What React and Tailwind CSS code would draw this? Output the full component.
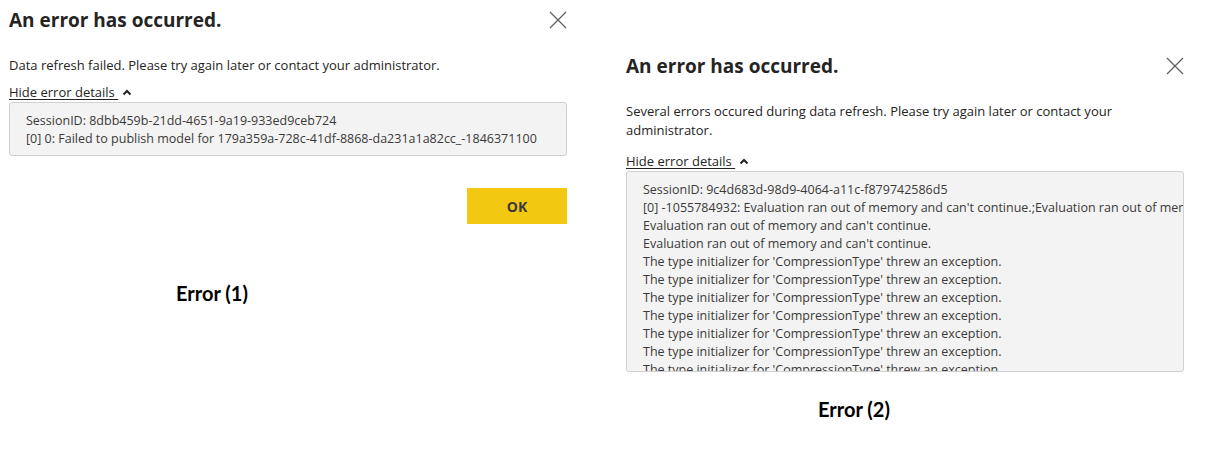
import React from 'react';

const ui = { fontFamily: '"Open Sans", "Noto Sans", sans-serif' };
const label = { fontFamily: 'Lato, "Open Sans", sans-serif' };

const details2 = [
  'SessionID: 9c4d683d-98d9-4064-a11c-f879742586d5',
  "[0] -1055784932: Evaluation ran out of memory and can't continue.;Evaluation ran out of memory and can't continue.",
  "Evaluation ran out of memory and can't continue.",
  "Evaluation ran out of memory and can't continue.",
  ...Array(7).fill("The type initializer for 'CompressionType' threw an exception."),
];

const details1 = [
  'SessionID: 8dbb459b-21dd-4651-9a19-933ed9ceb724',
  '[0] 0: Failed to publish model for 179a359a-728c-41df-8868-da231a1a82cc_-1846371100',
];

function CloseIcon() {
  return (
    <svg width="18" height="18" viewBox="0 0 18 18" className="text-[#605e5c]">
      <path d="M1 1 L17 17 M17 1 L1 17" stroke="currentColor" strokeWidth="1.2" fill="none" />
    </svg>
  );
}

function Chevron() {
  return (
    <svg width="10" height="7" viewBox="0 0 10 7" className="ml-[4px] inline-block">
      <path d="M1.5 5.5 L5 2 L8.5 5.5" stroke="#252423" strokeWidth="2" fill="none" />
    </svg>
  );
}

function ErrorDialog({ message, lines, scroll, gapLink, children }) {
  return (
    <div className="w-[558px] text-[#252423]" style={ui}>
      <div className="flex items-center justify-between">
        <h1 className="text-[19px] font-bold leading-[24px]">An error has occurred.</h1>
        <CloseIcon />
      </div>
      <p className="mt-[24px] text-[13px] leading-[19px]">{message}</p>
      <div className={`flex items-center text-[13px] leading-[18px] ${gapLink}`}>
        <span className="underline underline-offset-2">Hide error details&nbsp;</span>
        <Chevron />
      </div>
      <div
        className={`mt-[1px] rounded-[3px] border border-[#d0d0d0] bg-[#f3f3f3] pt-[9px] pb-[7px] pl-4 text-[12.5px] leading-[18px] text-[#3b3a39] ${
          scroll ? 'h-[201px] overflow-hidden whitespace-nowrap' : ''
        }`}
      >
        {lines.map((l, i) => (
          <div key={i}>{l}</div>
        ))}
      </div>
      {children}
    </div>
  );
}

export default function App() {
  return (
    <div className="flex h-[459px] w-[1221px] bg-white pl-[9px]">
      <div className="pt-[8px]">
        <ErrorDialog
          message="Data refresh failed. Please try again later or contact your administrator."
          lines={details1}
          gapLink="mt-[8px]"
        >
          <div className="mt-[32px] flex justify-end">
            <button className="h-[36px] w-[100px] bg-[#f2c811] text-[14px] font-bold text-[#3b3a39]">OK</button>
          </div>
          <p className="ml-[167px] mt-[57px] text-[20px] font-bold leading-[24px] text-black" style={label}>
            Error (1)
          </p>
        </ErrorDialog>
      </div>
      <div className="ml-[59px] pt-[54px]">
        <ErrorDialog
          message="Several errors occured during data refresh. Please try again later or contact your administrator."
          lines={details2}
          scroll
          gapLink="mt-[12px]"
        >
          <p className="ml-[192px] mt-[25px] text-[20px] font-bold leading-[24px] text-black" style={label}>
            Error (2)
          </p>
        </ErrorDialog>
      </div>
    </div>
  );
}
